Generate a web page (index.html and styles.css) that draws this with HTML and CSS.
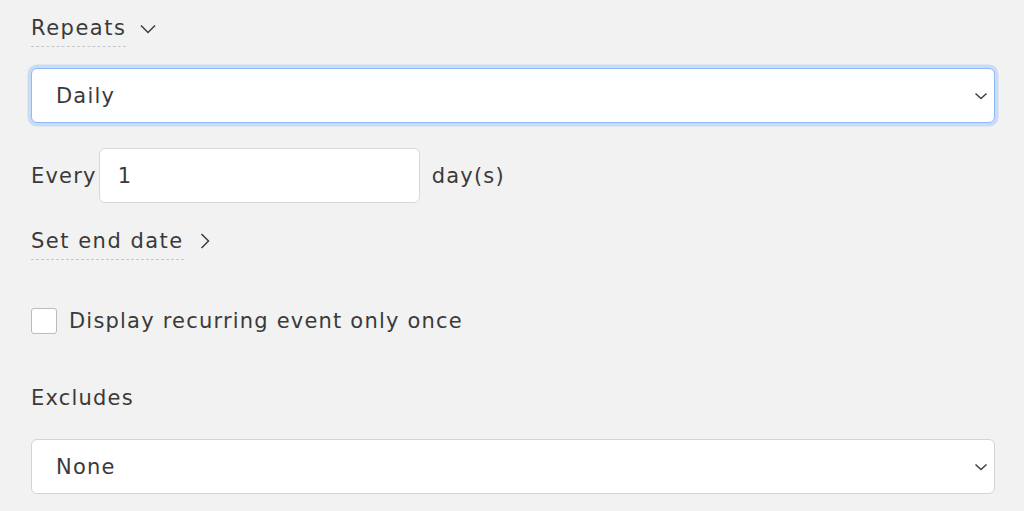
FILE: index.html
```html
<!DOCTYPE html>
<html>
<head>
<meta charset="utf-8">
<link rel="stylesheet" href="styles.css">
</head>
<body>
<div class="form">
  <div class="toggle-row">
    <span class="toggle-label">Repeats</span>
    <svg class="chev down" width="16" height="10" viewBox="0 0 16 10"><path d="M1 1.5 L8 8.5 L15 1.5" fill="none" stroke="#3c3c3c" stroke-width="1.5"/></svg>
  </div>
  <div class="select focused">
    <span>Daily</span>
    <svg class="sel-chev" width="14" height="10" viewBox="0 0 14 10"><path d="M1.5 2.5 L7 7.5 L12.5 2.5" fill="none" stroke="#444" stroke-width="1.6"/></svg>
  </div>
  <div class="every-row">
    <span>Every</span>
    <div class="input">1</div>
    <span>day(s)</span>
  </div>
  <div class="toggle-row end">
    <span class="toggle-label">Set end date</span>
    <svg class="chev right" width="10" height="16" viewBox="0 0 10 16"><path d="M1.5 1 L8.5 8 L1.5 15" fill="none" stroke="#3c3c3c" stroke-width="1.5"/></svg>
  </div>
  <label class="check-row">
    <span class="box"></span>
    <span>Display recurring event only once</span>
  </label>
  <div class="label">Excludes</div>
  <div class="select last">
    <span>None</span>
    <svg class="sel-chev" width="14" height="10" viewBox="0 0 14 10"><path d="M1.5 2.5 L7 7.5 L12.5 2.5" fill="none" stroke="#444" stroke-width="1.6"/></svg>
  </div>
</div>
</body>
</html>
```
FILE: styles.css
```css
html, body {
  margin: 0;
  padding: 0;
  background: #f2f2f2;
}
body {
  font-family: "DejaVu Sans", "Open Sans", sans-serif;
  font-size: 21px;
  letter-spacing: 1.2px;
  color: #3a3a3a;
  width: 1024px;
  height: 511px;
  overflow: hidden;
}
.form {
  padding: 13px 29px 0 31px;
  display: flex;
  flex-direction: column;
}
.toggle-row {
  display: flex;
  align-items: center;
  gap: 14px;
  height: 34px;
}
.toggle-label {
  border-bottom: 1.5px dashed #c4c8cc;
  padding-bottom: 4px;
  line-height: 28px;
  letter-spacing: 1.5px;
}
.chev.down { margin-top: -2px; }
.chev.right { margin-top: -4px; margin-left: 2px; }
.select {
  margin-top: 21px;
  height: 55px;
  box-sizing: border-box;
  background: #fff;
  border: 1px solid #d4d4d4;
  border-radius: 6px;
  display: flex;
  align-items: center;
  justify-content: space-between;
  padding: 0 6px 0 24px;
}
.select.focused {
  border: 1.5px solid #8dbaf9;
  box-shadow: 0 0 0 3.5px #c8dcf6;
}
.every-row {
  margin-top: 25px;
  display: flex;
  align-items: center;
}
.every-row .input {
  margin: 0 12px 0 2px;
  width: 321px;
  height: 55px;
  box-sizing: border-box;
  background: #fff;
  border: 1px solid #d8d8d8;
  border-radius: 6px;
  display: flex;
  align-items: center;
  padding-left: 18px;
}
.toggle-row.end { margin-top: 23px; }
.check-row {
  margin-top: 48px;
  display: flex;
  align-items: center;
  gap: 12px;
}
.box {
  width: 26px;
  height: 26px;
  box-sizing: border-box;
  border: 1.5px solid #bcbcbc;
  border-radius: 3px;
  background: #fff;
}
.label {
  margin-top: 52px;
}
.select.last { margin-top: 29px; }
```
